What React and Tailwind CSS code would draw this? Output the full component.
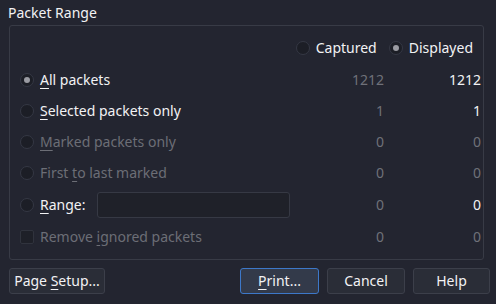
import React from 'react';

const F = { fontFamily: '"Noto Sans", "DejaVu Sans", sans-serif' };

function Radio({ checked = false }) {
  return (
    <span className="flex h-[14px] w-[14px] shrink-0 items-center justify-center rounded-full border border-[#353844] bg-[#1c1e26]">
      {checked && <span className="h-[6px] w-[6px] rounded-full bg-[#9a9ba2]" />}
    </span>
  );
}

function Mn({ children }) {
  return <span className="underline decoration-1 underline-offset-[3px]">{children}</span>;
}

function Row({ label, capt, disp, enabled = true, checked = false, dispBright = false, h = 'h-[31px]', extra }) {
  const txt = enabled ? 'text-[#f2f2f4]' : 'text-[#6c6e76]';
  return (
    <div className={`flex items-center ${h}`}>
      <div className="flex flex-1 items-center gap-[6px] pl-[10px]">
        <Radio checked={checked} />
        <span className={txt}>{label}</span>
        {extra}
      </div>
      <div className="w-[60px] text-right text-[#6f7179]">{capt}</div>
      <div className={`w-[97px] text-right ${dispBright ? 'text-[#f2f2f4]' : 'text-[#6f7179]'}`}>{disp}</div>
    </div>
  );
}

export default function App() {
  return (
    <div className="h-[304px] w-[496px] overflow-hidden bg-[#232530] text-[14px] leading-none" style={F}>
      <div className="flex h-[25px] items-center pl-[8px] text-[#f2f2f4]">Packet Range</div>

      <div className="mx-[9px] mr-[12px] rounded-[3px] border border-[#383b46] pb-[7px] pr-[2px] pt-[10px]">
        <div className="flex h-[24px] items-center justify-end gap-[6px] pr-[8px]">
          <Radio />
          <span className="text-[#f2f2f4]">Captured</span>
          <span className="w-0" />
          <Radio checked />
          <span className="text-[#f2f2f4]">Displayed</span>
        </div>
        <div className="h-[4px]" />
        <Row label={<><Mn>A</Mn>ll packets</>} capt="1212" disp="1212" checked dispBright />
        <Row label={<><Mn>S</Mn>elected packets only</>} capt="1" disp="1" dispBright />
        <Row label={<><Mn>M</Mn>arked packets only</>} capt="0" disp="0" enabled={false} />
        <Row label={<>First <Mn>t</Mn>o last marked</>} capt="0" disp="0" enabled={false} />
        <Row
          label={<><Mn>R</Mn>ange:</>}
          capt="0"
          disp="0"
          dispBright
          h="h-[33px]"
          extra={<div className="ml-[6px] h-[26px] w-[193px] rounded-[3px] border border-[#363944] bg-[#1f2129]" />}
        />
        <div className="flex h-[31px] items-center">
          <div className="flex flex-1 items-center gap-[6px] pl-[10px]">
            <span className="h-[14px] w-[14px] shrink-0 rounded-[2px] border border-[#30333d] bg-[#1e2028]" />
            <span className="text-[#6c6e76]">Remove <Mn>i</Mn>gnored packets</span>
          </div>
          <div className="w-[60px] text-right text-[#6f7179]">0</div>
          <div className="w-[97px] text-right text-[#6f7179]">0</div>
        </div>
      </div>

      <div className="mt-[8px] flex items-center px-[9px] pr-[6px] text-[#f2f2f4]">
        <button className="h-[26px] w-[96px] rounded-[3px] border border-[#3c3f4a] bg-[#2a2d37]">
          Page <Mn>S</Mn>etup...
        </button>
        <div className="flex-1" />
        <div className="flex gap-[8px]">
          <button className="h-[26px] w-[79px] rounded-[3px] border border-[#3d78c9] bg-[#333a4a]">
            <Mn>P</Mn>rint...
          </button>
          <button className="h-[26px] w-[78px] rounded-[3px] border border-[#3c3f4a] bg-[#2a2d37]">Cancel</button>
          <button className="h-[26px] w-[77px] rounded-[3px] border border-[#3c3f4a] bg-[#2a2d37]">Help</button>
        </div>
      </div>
    </div>
  );
}
